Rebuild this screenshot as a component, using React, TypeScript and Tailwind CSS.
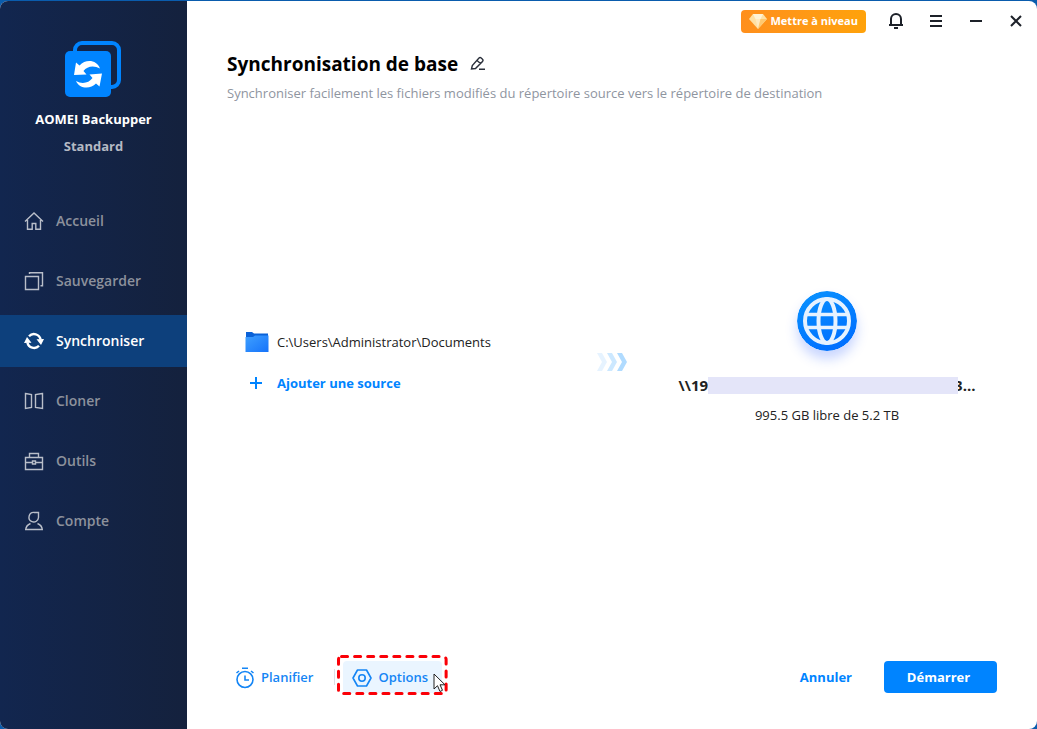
import React from "react";

interface NavItem {
    label: string;
    icon: React.ReactNode;
    active?: boolean;
}

const navItems: NavItem[] = [
    {
        label: "Accueil",
        icon: <path d="M1 10.500 10 2l9 8.500M3.500 9v9.300h4.700v-5.800h3.600v5.800h4.700V9" />,
    },
    {
        label: "Sauvegarder",
        icon: <path d="M1.500 5.500h13v13h-13zM5.500 3V1.700h13v13h-2" />,
    },
    {
        label: "Synchroniser",
        active: true,
        icon: (
            <>
                <path d="M5 5.200A6.800 6.800 0 0 1 16.600 8.500M15 14.800A6.800 6.800 0 0 1 3.400 11.500" strokeWidth="2.400" />
                <path d="M12.500 8.200L20 8l-3 6zM7.500 11.800L0 12l3-6z" fill="currentColor" stroke="none" />
            </>
        ),
    },
    {
        label: "Cloner",
        icon: <path d="M1.500 2.500l6 1v13l-6 1zM18.500 2.500l-7 1v13l7 1z" />,
    },
    {
        label: "Outils",
        icon: <path d="M1.500 6.500h17v12h-17zM5.500 6.500v-4h9v4M1.500 11.500h6.500M12 11.500h6.500M8.500 10h3v3h-3z" />,
    },
    {
        label: "Compte",
        icon: <path d="M14.500 1.500H10.500a4.800 4.800 0 0 0-2.500 9.200a4.800 4.800 0 0 0 6.500-4.200zM6.500 12.500c-3 1.200-4.500 3-4.800 6h16.600c-.300-3-1.800-4.800-4.800-6" />,
    },
];

const Logo: React.FC = () => (
    <svg width="57" height="56" viewBox="0 0 57 56" fill="none">
        <path d="M10 12V9a7 7 0 0 1 7-7h30a7 7 0 0 1 7 7v30a7 7 0 0 1-7 7h-3" stroke="#0084ff" strokeWidth="4" />
        <rect y="10" width="46" height="46" rx="5" fill="#0084ff" />
        <path
            d="M35 27.500C32 19 21 17.500 14.500 24.500L11 21.500 9 34l12.500-.500-3-3.500C22 25 29 24 35 27.500z"
            fill="#fff"
        />
        <path
            d="M11 40C14 47.500 25 49 31 42.500l3.500 3L37 32.500l-12.500 1 3 3.500C24 42 17 43.500 11 40z"
            fill="#fff"
        />
    </svg>
);

const Sidebar: React.FC = () => (
    <aside className="w-[187px] shrink-0 bg-linear-to-r from-[#12264f] to-[#14213d] pt-10">
        <div className="flex flex-col items-center">
            <Logo />
            <p className="mt-3 text-[13px] leading-5 font-bold text-white">AOMEI Backupper</p>
            <p className="mt-[7px] text-[13px] leading-5 font-bold text-[#b4b9c3]">Standard</p>
        </div>
        <nav className="mt-[39px] flex flex-col gap-2">
            {navItems.map((item) => (
                <a
                    key={item.label}
                    href="#"
                    className={`flex h-[52px] items-center gap-3 pl-6 text-sm font-semibold ${
                        item.active ? "bg-[#0d407c] text-white" : "text-[#8c919c]"
                    }`}
                >
                    <svg
                        width="20"
                        height="20"
                        viewBox="0 0 20 20"
                        fill="none"
                        stroke="currentColor"
                        strokeWidth="1.400"
                        className={item.active ? "text-white" : "text-[#b9bec9]"}
                    >
                        {item.icon}
                    </svg>
                    {item.label}
                </a>
            ))}
        </nav>
    </aside>
);

const WindowBar: React.FC = () => {
    const controls = [
        {label: "Notifications", path: "M5 13.500V8a5 5 0 0 1 10 0v5.500M3 14h14M8 17h4"},
        {label: "Menu", path: "M4 5h12M4 10h12M4 15h12"},
        {label: "Réduire", path: "M4 10h12"},
        {label: "Fermer", path: "M5 5l10 10M15 5L5 15"},
    ];

    return (
        <header className="flex h-10 items-center justify-end pr-px">
            <button className="mr-2.5 flex h-[23px] items-center gap-1 rounded bg-linear-to-r from-[#ff8f1c] to-[#ffa20a] px-2 text-[11px] font-bold whitespace-nowrap text-white">
                <svg width="18" height="15" viewBox="0 0 18 15">
                    <path d="M4 0h10l4 5-9 10L0 5z" fill="#ffe0a3" />
                    <path d="M4 0h10l-2.500 5h-5z" fill="#fff3d6" />
                    <path d="M6.500 5h5L9 15z" fill="#ffeac0" />
                    <path d="M11.500 5H18L9 15z" fill="#ffc870" />
                </svg>
                Mettre à niveau
            </button>
            {controls.map((control) => (
                <button key={control.label} aria-label={control.label} className="flex h-8 w-10 items-center justify-center">
                    <svg width="20" height="20" viewBox="0 0 20 20" fill="none" stroke="#1d2129" strokeWidth="2">
                        <path d={control.path} />
                    </svg>
                </button>
            ))}
        </header>
    );
};

const Source: React.FC = () => (
    <div className="flex flex-col gap-[21px] pl-12">
        <div className="flex items-center gap-2">
            <svg width="24" height="20" viewBox="0 0 24 20">
                <defs>
                    <linearGradient id="folder" x1="0" y1="0" x2="1" y2="1">
                        <stop offset="0" stopColor="#3fa0ff" />
                        <stop offset="1" stopColor="#1673fa" />
                    </linearGradient>
                </defs>
                <path d="M1 0h6l2 1.500h14V17H1z" fill="#0a62d8" />
                <path d="M.500 5h7.500l2-1.500h13.500V20H.500z" fill="url(#folder)" />
            </svg>
            <span className="text-[13px] leading-5 text-[#222]">C:\Users\Administrator\Documents</span>
        </div>
        <button className="flex items-center gap-3.5 self-start pl-1 text-[13px] leading-5 font-bold text-[#0084ff]">
            <svg width="14" height="14" viewBox="0 0 14 14" stroke="currentColor" strokeWidth="2">
                <path d="M7 1v12M1 7h12" />
            </svg>
            Ajouter une source
        </button>
    </div>
);

const Destination: React.FC = () => (
    <div className="flex flex-col items-center pb-2">
        <svg width="60" height="60" viewBox="0 0 60 60" fill="none" className="rounded-full shadow-[0_8px_12px_rgba(40,90,255,0.25)]">
            <defs>
                <linearGradient id="globe" x1="0" y1="0" x2="0.500" y2="1">
                    <stop offset="0" stopColor="#0a94ff" />
                    <stop offset="1" stopColor="#0070ff" />
                </linearGradient>
            </defs>
            <circle cx="30" cy="30" r="30" fill="url(#globe)" />
            <g stroke="#e6f2ff" strokeWidth="4">
                <circle cx="30" cy="30" r="22" />
                <ellipse cx="30" cy="30" rx="8.500" ry="22" />
                <path d="M9.500 23.500h41M9.500 36.500h41" strokeWidth="3.500" />
            </g>
        </svg>
        <p className="mt-6 flex items-center text-[15px] leading-5 font-bold text-[#222]">
            \\19
            {/* Adresse masquée */}
            <span className="z-10 h-[17px] w-[250px] bg-[#e4e5f9]" />
            <span className="-ml-1">3...</span>
        </p>
        <p className="mt-2.5 text-[13px] leading-5 text-[#222]">995.5 GB libre de 5.2 TB</p>
    </div>
);

const Footer: React.FC = () => (
    <footer className="flex h-8 items-center text-[13px] font-semibold text-[#1485f5]">
        <button className="flex h-8 items-center gap-1.5 pt-px pl-2">
            <svg width="20" height="22" viewBox="0 0 20 22" fill="none" stroke="currentColor" strokeWidth="1.600">
                <circle cx="10" cy="12.500" r="8" />
                <path d="M7 1.200h6M10 8.500v4.500h4M1.500 6l2.500-2M18.500 6L16 4" />
            </svg>
            Planifier
        </button>
        <div className="ml-[21px] h-4 w-px bg-[#dcdfe6]" />
        <div className="relative ml-2">
            <button className="flex h-8 items-center gap-1.5 rounded bg-[#eaf5ff] pt-px pr-3.5 pl-[9px]">
                <svg width="20" height="20" viewBox="0 0 20 20" fill="none" stroke="currentColor" strokeWidth="1.600">
                    <path d="M5.500 2h9L19 10l-4.500 8h-9L1 10z" strokeLinejoin="round" />
                    <circle cx="10" cy="10" r="3.200" />
                </svg>
                Options
            </button>
            {/* Cadre pointillé autour du bouton */}
            <svg className="pointer-events-none absolute -inset-x-1.5 -top-1.5 h-10 w-[calc(100%+12px)]" viewBox="0 0 110 40" preserveAspectRatio="none" fill="none">
                <rect x="1.500" y="1.500" width="107" height="37" rx="3" stroke="#fa0007" strokeWidth="3" strokeDasharray="6 7" strokeLinecap="round" />
            </svg>
            <svg className="pointer-events-none absolute -right-1 top-3" width="13" height="20" viewBox="0 0 13 20">
                <path d="M1 1v15l3.500-3.300L7 18.500l2.500-1.200L7 11.800h5z" fill="#fff" stroke="#222" />
            </svg>
        </div>
        <button className="ml-auto h-8 px-3 pt-0.5 font-bold text-[#0084ff]">Annuler</button>
        <button className="ml-5 h-8 w-[113px] rounded bg-[#0084ff] pt-0.5 pr-1 font-bold text-white">Démarrer</button>
    </footer>
);

const App: React.FC = () => {
    return (
        <div className="flex min-h-screen flex-col bg-[#0a5cad] pt-px font-['Open_Sans','Noto_Sans',sans-serif]">
            <div className="flex grow overflow-hidden rounded-lg bg-white">
                <Sidebar />
                <main className="flex min-w-0 grow flex-col pb-9">
                    <WindowBar />
                    <section className="px-10 pt-[9px]">
                        <div className="flex items-center gap-3">
                            <h1 className="text-[19px] leading-7 font-bold text-black">Synchronisation de base</h1>
                            <button aria-label="Modifier le nom">
                                <svg width="16" height="16" viewBox="0 0 16 16" fill="none" stroke="#2b303b" strokeWidth="1.400">
                                    <path d="M1.500 13l.800-3.500L9 2a1.600 1.600 0 0 1 2.200 0l1.300 1.200a1.600 1.600 0 0 1 0 2.200L5.500 12.500zM7 4.500L10.500 7.500M9 13.300H15" />
                                </svg>
                            </button>
                        </div>
                        <p className="mt-[5px] text-[13px] leading-5 text-[#8f959f]">
                            Synchroniser facilement les fichiers modifiés du répertoire source vers le répertoire de destination
                        </p>
                    </section>
                    <section className="grid grow grid-cols-[1fr_30px_1fr] items-center px-2.5 pb-10">
                        <Source />
                        <svg width="30" height="18" viewBox="0 0 30 18">
                            <path d="M0 0h5l5 9-5 9H0l5-9z" fill="#e6f3ff" />
                            <path d="M10 0h5l5 9-5 9h-5l5-9z" fill="#cce8ff" />
                            <path d="M20 0h5l5 9-5 9h-5l5-9z" fill="#b0dbff" />
                        </svg>
                        <Destination />
                    </section>
                    <div className="px-10">
                        <Footer />
                    </div>
                </main>
            </div>
        </div>
    );
};

export default App;
